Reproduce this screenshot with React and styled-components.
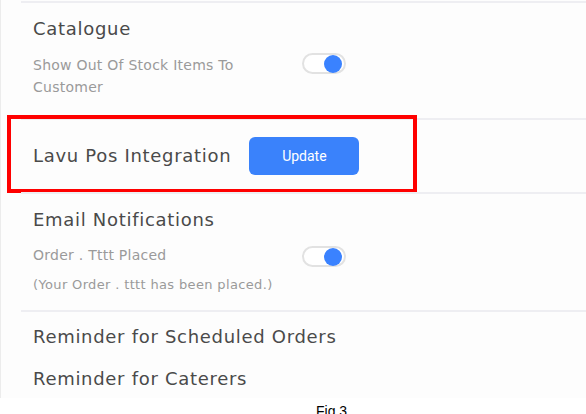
import React from "react";
import styled, { createGlobalStyle } from "styled-components";

const GlobalStyle = createGlobalStyle`
  html, body {
    margin: 0;
    padding: 0;
    background: #ffffff;
  }
  body {
    font-family: "DejaVu Sans", "Open Sans", sans-serif;
    width: 586px;
    height: 414px;
    overflow: hidden;
  }
`;

const Panel = styled.div`
  height: 398px;
  border-left: 1px solid #ececec;
  background: #fdfdfd;
  padding-top: 1px;
  box-sizing: border-box;
`;

const Section = styled.section`
  position: relative;
  margin-left: 20px;
  padding-left: 12px;
  border-top: 2px solid #eeeef2;
  height: ${(p) => p.h}px;
  box-sizing: border-box;
`;

const Heading = styled.h3`
  margin: 0;
  font-weight: 400;
  font-size: 18px;
  letter-spacing: 0.7px;
  line-height: 22px;
  color: #4a4a4a;
  padding-top: ${(p) => p.pt || 0}px;
  white-space: nowrap;
`;

const Row = styled.div`
  display: grid;
  grid-template-columns: 250px 44px;
  column-gap: 19px;
  align-items: start;
  margin-top: ${(p) => p.mt || 0}px;
`;

const Label = styled.div`
  font-size: 14px;
  letter-spacing: 0.25px;
  line-height: 22px;
  color: #9a9a9a;
`;

const Hint = styled.div`
  font-size: 13px;
  letter-spacing: 0.35px;
  line-height: 20px;
  color: #9a9a9a;
  margin-top: 8px;
`;

const Toggle = styled.div`
  width: 44px;
  height: 21px;
  box-sizing: border-box;
  border: 2px solid #e2e2e2;
  border-radius: 11px;
  background: #ffffff;
  display: flex;
  align-items: center;
  justify-content: flex-end;
  padding-right: 2px;
  margin-top: ${(p) => p.mt || 0}px;
`;

const Knob = styled.span`
  width: 18px;
  height: 18px;
  border-radius: 50%;
  background: #3a82ff;
`;

const InlineRow = styled.div`
  display: flex;
  align-items: center;
  gap: 18px;
  height: 100%;
`;

const UpdateButton = styled.button`
  width: 110px;
  height: 38px;
  border: none;
  border-radius: 6px;
  background: #3a82fb;
  color: #ffffff;
  font-family: Roboto, "Liberation Sans", sans-serif;
  font-size: 14px;
  margin-top: -1px;
`;

const Highlight = styled.div`
  position: absolute;
  left: -14px;
  top: -5px;
  width: 410px;
  height: 78px;
  border: 4px solid #ff0000;
  box-sizing: border-box;
  pointer-events: none;
`;

const Caption = styled.div`
  font-family: "Liberation Sans", Arial, sans-serif;
  font-size: 14px;
  color: #000;
  padding-left: 316px;
  padding-top: 5px;
`;

export default function App() {
  return (
    <>
      <GlobalStyle />
      <Panel>
        <Section h={117}>
          <Heading pt={15}>Catalogue</Heading>
          <Row mt={14}>
            <Label>Show Out Of Stock Items To Customer</Label>
            <Toggle mt={-1}>
              <Knob />
            </Toggle>
          </Row>
        </Section>
        <Section h={74}>
          <InlineRow>
            <Heading>Lavu Pos Integration</Heading>
            <UpdateButton>Update</UpdateButton>
          </InlineRow>
          <Highlight />
        </Section>
        <Section h={118}>
          <Heading pt={15}>Email Notifications</Heading>
          <Row mt={13}>
            <Label>Order . Tttt Placed</Label>
            <Toggle mt={2}>
              <Knob />
            </Toggle>
          </Row>
          <Hint>(Your Order . tttt has been placed.)</Hint>
        </Section>
        <Section h={88}>
          <Heading pt={14}>Reminder for Scheduled Orders</Heading>
          <Heading pt={20}>Reminder for Caterers</Heading>
        </Section>
      </Panel>
      <Caption>Fig 3</Caption>
    </>
  );
}
